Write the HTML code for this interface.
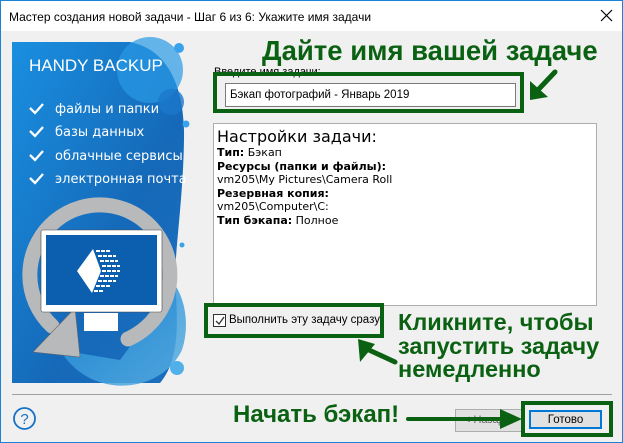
<!DOCTYPE html>
<html><head><meta charset="utf-8"><style>
*{margin:0;padding:0;box-sizing:border-box}
body{width:623px;height:443px;overflow:hidden;background:#f0f0f0;font-family:"Liberation Sans","DejaVu Sans",sans-serif;position:relative}
.abs{position:absolute}
.win{left:0;top:0;width:623px;height:443px;border:1px solid #1883d7}
.title{left:1px;top:1px;width:621px;height:30px;background:#fff;font-size:12px;color:#000;padding:9px 0 0 8px}
.g{color:#0b6112;font-weight:bold;font-family:"Liberation Sans",sans-serif;white-space:nowrap}
.gb{border:4px solid #0b6112}
.set{line-height:13.5px;color:#000;font-family:"DejaVu Sans",sans-serif;font-size:11px}
</style></head><body>
<div class="abs win"></div>
<div class="abs title">Мастер создания новой задачи - Шаг 6 из 6: Укажите имя задачи</div>
<svg class="abs" style="left:600px;top:9px" width="13" height="13"><path d="M1 1L12 12M12 1L1 12" stroke="#000" stroke-width="1.2"/></svg>

<svg class="abs" style="left:0;top:30px" width="210" height="360">
<defs><linearGradient id="bg" x1="0" y1="0" x2="1" y2="1"><stop offset="0" stop-color="#1a8fe0"/><stop offset="0.6" stop-color="#1569b8"/><stop offset="1" stop-color="#1b6fbf"/></linearGradient>
<linearGradient id="bg2" x1="0" y1="0" x2="1" y2="1"><stop offset="0" stop-color="#1c8ad8"/><stop offset="1" stop-color="#5aaee0"/></linearGradient></defs>
<path d="M12 12H130C170 20 185 60 184 110C183 170 175 220 175 250C178 290 180 330 160 353H12Z" fill="url(#bg)"/>
<circle cx="150" cy="40" r="33" fill="#2a9ae6" opacity="0.7"/>
<circle cx="171" cy="72" r="13" fill="#1b78cc" opacity="0.8"/>
<circle cx="179" cy="18" r="5" fill="#3aa2ea"/>
<circle cx="186" cy="94" r="3.5" fill="#3aa2ea"/>
<circle cx="182" cy="215" r="2.5" fill="#3aa2ea"/>
<path d="M60 320C90 370 160 365 182 320C190 295 185 270 175 255L120 330Z" fill="url(#bg2)" opacity="0.85"/>
<circle cx="177" cy="338" r="7" fill="#4fb0ea"/>
<text x="29" y="41" fill="#fff" font-size="17" font-family="Liberation Sans">HANDY BACKUP</text>
<g fill="#fff" font-size="13" font-family="DejaVu Sans"><text x="55" y="83">файлы и папки</text><text x="55" y="106">базы данных</text><text x="55" y="130">облачные сервисы</text><text x="55" y="153">электронная почта</text></g>
<g stroke="#fff" stroke-width="2.3" fill="none"><path d="M30 78l5 5 8-9"/><path d="M30 101l5 5 8-9"/><path d="M30 125l5 5 8-9"/><path d="M30 148l5 5 8-9"/></g>
<path d="M128 309A70 70 0 1 0 52 296" stroke="#b8b9bb" stroke-width="15" fill="none" stroke-linecap="round"/>
<path d="M75 278L33 322L80 327Z" fill="#b8b9bb" stroke="#666" stroke-width="0.6"/>
<g transform="translate(0,-30)">
<rect x="41" y="230" width="121" height="82" rx="2" fill="#fff" stroke="#444" stroke-width="0.6"/>
<rect x="46" y="235" width="111" height="70" fill="#0c5fae"/>
<rect x="84" y="313" width="34" height="18" fill="#fff"/>
<path d="M93 249L101 271L92 293L77 271Z" fill="#fff"/>
<g fill="#fff">
<rect x="96" y="250" width="4" height="2"/><rect x="101" y="250" width="4" height="2"/><rect x="106" y="250" width="4" height="2"/>
<rect x="98" y="255" width="4" height="2"/><rect x="103" y="255" width="4" height="2"/><rect x="108" y="255" width="4" height="2"/><rect x="113" y="255" width="3" height="2"/>
<rect x="100" y="260" width="4" height="2"/><rect x="105" y="260" width="4" height="2"/><rect x="110" y="260" width="4" height="2"/><rect x="115" y="260" width="3" height="2"/>
<rect x="102" y="265" width="4" height="2"/><rect x="107" y="265" width="4" height="2"/><rect x="112" y="265" width="4" height="2"/><rect x="117" y="265" width="3" height="2"/>
<rect x="102" y="270" width="4" height="2"/><rect x="107" y="270" width="4" height="2"/><rect x="112" y="270" width="4" height="2"/><rect x="117" y="270" width="3" height="2"/>
<rect x="100" y="275" width="4" height="2"/><rect x="105" y="275" width="4" height="2"/><rect x="110" y="275" width="4" height="2"/><rect x="115" y="275" width="3" height="2"/>
<rect x="98" y="280" width="4" height="2"/><rect x="103" y="280" width="4" height="2"/><rect x="108" y="280" width="4" height="2"/><rect x="113" y="280" width="3" height="2"/>
<rect x="96" y="285" width="4" height="2"/><rect x="101" y="285" width="4" height="2"/><rect x="106" y="285" width="4" height="2"/>
<rect x="94" y="290" width="4" height="2"/><rect x="99" y="290" width="4" height="2"/>
</g>
</g>
</svg>

<div class="abs g" style="left:262px;top:35px;font-size:27.5px">Дайте имя вашей задаче</div>
<div class="abs" style="left:214px;top:66px;font-size:11px;color:#000">Введите имя задачи:</div>
<div class="abs gb" style="left:213px;top:72px;width:311px;height:41px"></div>
<div class="abs" style="left:225px;top:83px;width:291px;height:24px;background:#fff;border:1px solid #7a7a7a;font-size:11.5px;padding:5px 0 0 4px">Бэкап фотографий - Январь 2019</div>
<svg class="abs" style="left:525px;top:66px" width="40" height="40"><path d="M30 6L12 25" stroke="#0b6112" stroke-width="5" stroke-linecap="round"/><path d="M5 15L5 34L23 31Z" fill="#0b6112"/></svg>

<div class="abs set" style="left:213px;top:123px;width:384px;height:183px;background:#fff;border:1px solid #adadad;padding:3px 0 0 3px">
<div style="font-size:16px;line-height:19px">Настройки задачи:</div>
<div><b>Тип:</b> Бэкап</div><div><b>Ресурсы (папки и файлы):</b></div><div>vm205\My Pictures\Camera Roll</div><div><b>Резервная копия:</b></div><div>vm205\Computer\C:</div><div><b>Тип бэкапа:</b> Полное</div></div>

<div class="abs gb" style="left:204px;top:303px;width:180px;height:35px;background:#f0f0f0"></div>
<div class="abs" style="left:213px;top:314px;width:13px;height:13px;border:1px solid #333;background:#fff"></div>
<svg class="abs" style="left:214px;top:315px" width="12" height="12"><path d="M2 6l3 3 5-7" stroke="#333" stroke-width="1.3" fill="none"/></svg>
<div class="abs" style="left:229px;top:314px;font-size:11.5px">Выполнить эту задачу сразу</div>
<div class="abs g" style="left:398px;top:311px;font-size:23.5px;line-height:23.5px">Кликните, чтобы<br>запустить задачу<br>немедленно</div>
<svg class="abs" style="left:355px;top:336px" width="45" height="32"><path d="M40 26L14 14" stroke="#0b6112" stroke-width="5" stroke-linecap="round"/><path d="M3 3L5 26L20 8Z" fill="#0b6112"/></svg>

<div class="abs" style="left:12px;top:394px;width:600px;height:1px;background:#a0a0a0"></div>
<svg class="abs" style="left:12px;top:406px" width="26" height="26"><circle cx="12.5" cy="12.5" r="10.5" stroke="#1572c6" stroke-width="1.8" fill="none"/><text x="12.5" y="18" text-anchor="middle" font-size="15" fill="#1572c6" font-family="Liberation Sans">?</text></svg>
<div class="abs g" style="left:233px;top:401px;font-size:24px">Начать бэкап!</div>
<div class="abs" style="left:455px;top:409px;width:70px;height:23px;background:#e1e1e1;border:1px solid #adadad;font-size:11px;padding:4px 0 0 8px;color:#666">&lt; Назад</div>
<svg class="abs" style="left:405px;top:406px" width="120" height="24"><path d="M3 13H100" stroke="#0b6112" stroke-width="4" stroke-linecap="round"/><path d="M95 3L117 13L95 23Z" fill="#0b6112"/></svg>
<div class="abs gb" style="left:521px;top:401px;width:92px;height:36px;background:#f0f0f0"></div>
<div class="abs" style="left:529px;top:410px;width:73px;height:19px;background:#e1e1e1;border:2px solid #0078d7;font-size:11.5px;text-align:center;padding-top:2px">Готово</div>
</body></html>
